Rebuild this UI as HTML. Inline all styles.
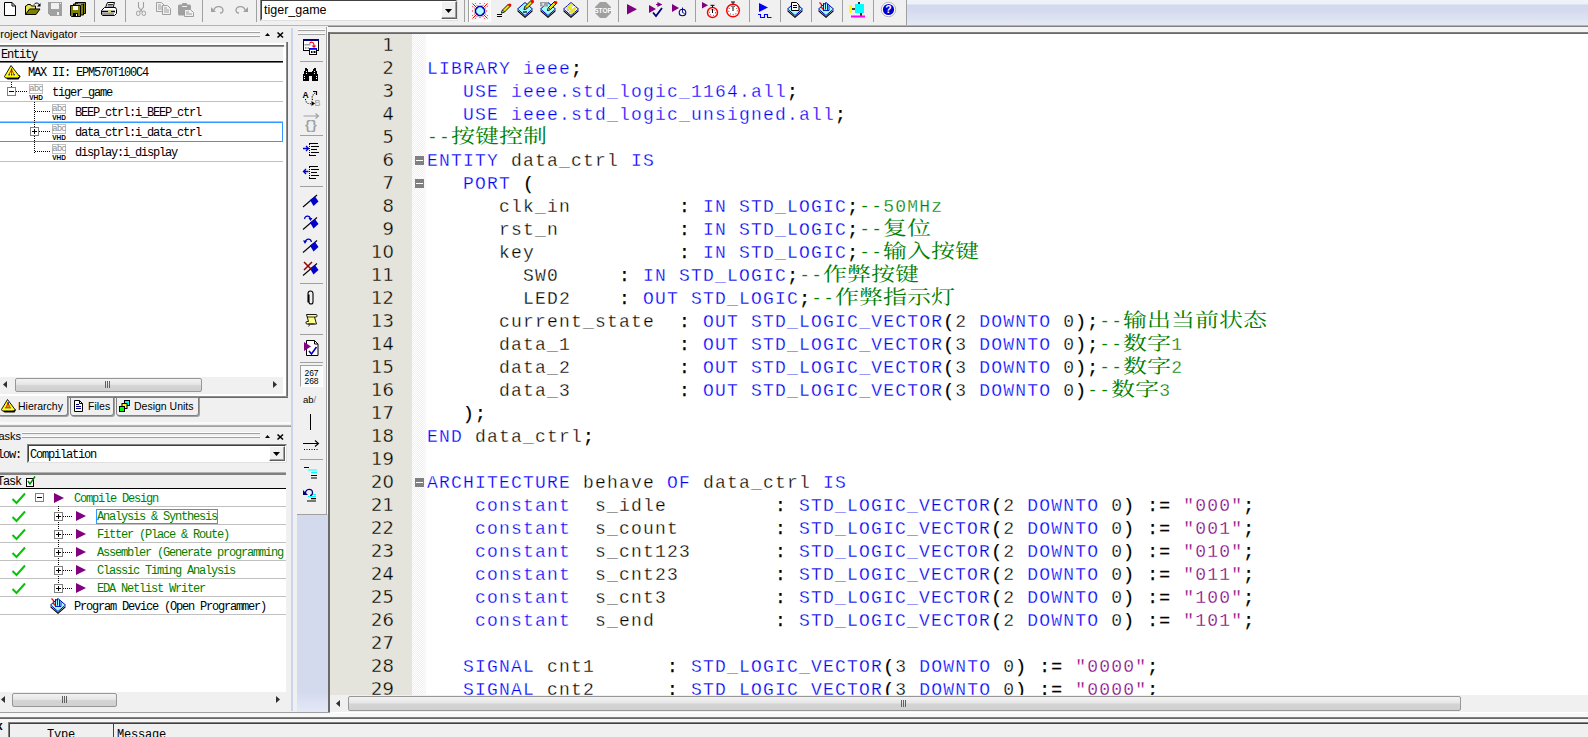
<!DOCTYPE html>
<html><head><meta charset="utf-8"><title>Quartus II</title>
<style>
html,body{margin:0;padding:0}
body{width:1588px;height:737px;overflow:hidden;background:#f0f0f0;position:relative;font-family:"Liberation Sans",sans-serif;font-size:11px;color:#000}
.a{position:absolute}
.hl{position:absolute;height:1px}
.vl{position:absolute;width:1px}
svg{position:absolute;overflow:visible}
.ui{position:absolute;font-family:"Liberation Sans",sans-serif;font-size:11px;white-space:pre;line-height:13px}
.sim{position:absolute;font-family:"Liberation Mono","Noto Sans CJK SC",monospace;font-size:12px;letter-spacing:-1.2px;white-space:pre;line-height:14px;color:#000;margin-top:1px}
.grn{color:#008000}
/* editor */
#ed{position:absolute;left:330px;top:34px;width:1258px;height:661px;background:#fff;overflow:hidden}
#lnm{position:absolute;left:0;top:0;width:82px;height:662px;background:#e4e4dc}
#fold{position:absolute;left:82px;top:0;width:14px;height:662px;background:repeating-conic-gradient(#f0f0f0 0% 25%,#fff 0% 50%) 0 0/2px 2px}
.ln{position:absolute;left:0;width:64px;text-align:right;font-family:"DejaVu Sans","Liberation Sans",sans-serif;font-size:18px;line-height:23px;height:23px;color:#000;margin-top:-1px;-webkit-text-stroke:.35px #e4e4dc}
.cl{position:absolute;left:97px;height:23px;line-height:23px;font-family:"Liberation Mono","Noto Serif CJK SC",monospace;font-size:18px;letter-spacing:1.2px;white-space:pre;color:#000;margin-top:1px;-webkit-text-stroke:.3px #fff}
.cl b{font-weight:normal;-webkit-text-stroke:.25px #000}
.k{color:#0000ff}.t{color:#0000f0}.s{color:#800080}.c{color:#008000}
.z{display:inline-block;letter-spacing:0;-webkit-text-stroke:0 transparent;font-family:"Noto Serif CJK SC","Noto Sans CJK SC",serif;font-size:20px;line-height:0;transform:translateY(.6px) scale(1.2,.94);transform-origin:0 0;vertical-align:baseline}
.fb{position:absolute;left:85px;width:9px;height:9px;background:#808080}
.fb:after{content:"";position:absolute;left:1px;top:4px;width:7px;height:1px;background:#fff}
</style></head>
<body>
<div class="a" style="left:907px;top:0;width:681px;height:25px;background:linear-gradient(#f1f3fa 0,#eef1f9 4px,#d3d9ed 5px,#d6dcef 12px,#e4e8f5 24px)"></div>
<div class="a" style="left:906px;top:0px;width:1px;height:25px;background:#a0a0a0;"></div>
<div class="a" style="left:0px;top:25px;width:1588px;height:1px;background:#b4b4b4;"></div>
<div class="a" style="left:328px;top:26px;width:1260px;height:1px;background:#808080;"></div>
<div class="a" style="left:94px;top:0px;width:1px;height:22px;background:#a0a0a0;"></div>
<div class="a" style="left:125px;top:0px;width:1px;height:22px;background:#a0a0a0;"></div>
<div class="a" style="left:202px;top:0px;width:1px;height:22px;background:#a0a0a0;"></div>
<div class="a" style="left:256px;top:0px;width:1px;height:22px;background:#a0a0a0;"></div>
<div class="a" style="left:464px;top:0px;width:1px;height:22px;background:#a0a0a0;"></div>
<div class="a" style="left:468px;top:0px;width:1px;height:22px;background:#a0a0a0;"></div>
<div class="a" style="left:587px;top:0px;width:1px;height:22px;background:#a0a0a0;"></div>
<div class="a" style="left:618px;top:0px;width:1px;height:22px;background:#a0a0a0;"></div>
<div class="a" style="left:695px;top:0px;width:1px;height:22px;background:#a0a0a0;"></div>
<div class="a" style="left:749px;top:0px;width:1px;height:22px;background:#a0a0a0;"></div>
<div class="a" style="left:780px;top:0px;width:1px;height:22px;background:#a0a0a0;"></div>
<div class="a" style="left:811px;top:0px;width:1px;height:22px;background:#a0a0a0;"></div>
<div class="a" style="left:842px;top:0px;width:1px;height:22px;background:#a0a0a0;"></div>
<div class="a" style="left:873px;top:0px;width:1px;height:22px;background:#a0a0a0;"></div>
<svg style="left:4px;top:2px" width="12" height="14" viewBox="0 0 12 14" ><path d="M0.5 0.5h7.5l3.5 3.5v9.5h-11z" fill="#fff" stroke="#000"/><path d="M8 0.5v3.5h3.5" fill="none" stroke="#000"/></svg>
<svg style="left:25px;top:2px" width="16" height="14" viewBox="0 0 16 14" ><path d="M0.5 12.5v-8.5h1l1-1.5h3l1 1.5h4v3" fill="#e6e64c" stroke="#000"/><path d="M0.5 12.5l4-5.5h10.5l-4 5.5z" fill="#808000" stroke="#000"/><path d="M9 2.5c1.5-2 4-2 5.5 0.5" fill="none" stroke="#000"/><path d="M15.5 1v3.5h-3.5z" fill="#000"/></svg>
<svg style="left:48px;top:2px" width="14" height="14" viewBox="0 0 14 14" shape-rendering="crispEdges"><path d="M0 0h14v14h-12l-2-2z" fill="#a0a0a0"/><rect x="3" y="1" width="8" height="6" fill="#f0f0f0"/><rect x="9" y="10" width="2" height="3" fill="#f0f0f0"/><rect x="12" y="1" width="1" height="1" fill="#f0f0f0"/></svg>
<svg style="left:70px;top:2px" width="16" height="15" viewBox="0 0 16 15" ><g transform="translate(5,0)"><path d="M0.5 0.5h10v11h-9l-1-1z" fill="#808000" stroke="#000"/><rect x="3" y="1" width="5" height="4" fill="#fff"/><rect x="3" y="8" width="5" height="3" fill="#000"/><rect x="6" y="9" width="1" height="2" fill="#fff"/></g><g transform="translate(3,1.5)"><path d="M0.5 0.5h10v11h-9l-1-1z" fill="#808000" stroke="#000"/><rect x="3" y="1" width="5" height="4" fill="#fff"/><rect x="3" y="8" width="5" height="3" fill="#000"/><rect x="6" y="9" width="1" height="2" fill="#fff"/></g><g transform="translate(0,3)"><path d="M0.5 0.5h10v11h-9l-1-1z" fill="#808000" stroke="#000"/><rect x="3" y="1" width="5" height="4" fill="#fff"/><rect x="3" y="8" width="5" height="3" fill="#000"/><rect x="6" y="9" width="1" height="2" fill="#fff"/></g></svg>
<svg style="left:101px;top:2px" width="16" height="14" viewBox="0 0 16 14" ><path d="M4.5 5.5l2-5h7l-1.5 5" fill="#fff" stroke="#000"/><path d="M7 2.5h5M6.5 4h5" stroke="#000" stroke-width=".8"/><path d="M0.5 8.5l3-3h11l1 2v4l-2 2h-12l-1-1z" fill="#fff" stroke="#000"/><path d="M1 9.5h13" stroke="#000" stroke-width="1.6"/><rect x="7" y="8.6" width="3" height="1.6" fill="#e6e600"/><path d="M1 12h12" stroke="#000" stroke-width=".8"/></svg>
<svg style="left:136px;top:2px" width="10" height="14" viewBox="0 0 10 14" ><path d="M2.5 0v5l4 5M7.5 0v5l-4 5" fill="none" stroke="#a0a0a0" stroke-width="1.1"/><ellipse cx="2.2" cy="11.3" rx="1.8" ry="2.3" fill="none" stroke="#a0a0a0"/><ellipse cx="7.8" cy="11.3" rx="1.8" ry="2.3" fill="none" stroke="#a0a0a0"/></svg>
<svg style="left:156px;top:2px" width="16" height="14" viewBox="0 0 16 14" ><g transform="translate(0,0)"><path d="M0.5 0.5h5l3 3v6h-8z" fill="#f0f0f0" stroke="#a0a0a0"/><path d="M2 3h3M2 5h5M2 7h5" stroke="#a0a0a0"/></g><g transform="translate(6,3)"><path d="M0.5 0.5h5l3 3v6h-8z" fill="#f0f0f0" stroke="#a0a0a0"/><path d="M2 3h3M2 5h5M2 7h5" stroke="#a0a0a0"/></g></svg>
<svg style="left:178px;top:3px" width="16" height="14" viewBox="0 0 16 14" ><rect x="0" y="1.5" width="13" height="11" rx="1.5" fill="#a0a0a0"/><rect x="4" y="0" width="5" height="2.5" rx="1" fill="#a0a0a0"/><rect x="4" y="3" width="5" height="1" fill="#f0f0f0"/><path d="M6.5 6.5h6l3 3v4h-9z" fill="#f0f0f0" stroke="#a0a0a0"/><path d="M8 9h3M8 11h6" stroke="#a0a0a0"/></svg>
<svg style="left:211px;top:5px" width="13" height="9" viewBox="0 0 13 9" ><path d="M0 2v5h5z" fill="#a0a0a0"/><path d="M3 5c1-4 8-5 9 0c0 2-1 3-3 3" fill="none" stroke="#a0a0a0" stroke-width="1.3"/></svg>
<svg style="left:235px;top:5px" width="13" height="9" viewBox="0 0 13 9" ><path d="M13 2v5h-5z" fill="#a0a0a0"/><path d="M10 5c-1-4-8-5-9 0c0 2 1 3 3 3" fill="none" stroke="#a0a0a0" stroke-width="1.3"/></svg>
<div class="a" style="left:469px;top:0;width:22px;height:22px;background:#f8f8f8;border:1px solid #fdfdfd;box-sizing:border-box"></div>
<svg style="left:472px;top:3px" width="16" height="16" viewBox="0 0 16 16" ><path d="M0.500 0.500l15 15M15.500 0.500l-15 15" stroke="#f00" stroke-width="1"/><path d="M3 0l4 5M0 3l5 4M13 0l-4 5M16 3l-5 4M3 16l4-5M0 13l5-4M13 16l-4-5M16 13l-5-4" stroke="#f00" stroke-width=".7" stroke-dasharray="1.500 1"/><path d="M8 0v2M8 14v2M0 8h2M14 8h2" stroke="#f00" stroke-dasharray="1 1"/><path d="M6.500 3.500h3l3 3v3l-3 3h-3l-3-3v-3z" fill="#b0ffff" stroke="#0000c0" stroke-width="1.500"/></svg>
<svg style="left:497px;top:3px" width="14" height="15" viewBox="0 0 14 15" ><g transform="translate(3.5,1)"><path d="M1 9l1-3 6-6 2 2-6 6z" fill="#e6e600" stroke="#000" stroke-width=".9"/><path d="M1 9l1-3 2 2z" fill="#fff" stroke="#000" stroke-width=".7"/><circle cx="9.3" cy="1" r="1.6" fill="#f00"/></g><path d="M0 11.5h5M0 13.5h5" stroke="#000" stroke-width="1.1"/></svg>
<svg style="left:517px;top:2px" width="16" height="16" viewBox="0 0 16 16" ><path d="M8 0.5l7.5 6.5-7.5 6.5-7.5-6.5z" fill="#9ff" stroke="#0000c0"/><path d="M0.5 8l7.5 6.5 7.5-6.5v1.5l-7.5 6.5-7.5-6.5z" fill="#000"/><g transform="translate(6,-1.5)"><path d="M1 9l1-3 6-6 2 2-6 6z" fill="#e6e600" stroke="#000" stroke-width=".9"/><path d="M1 9l1-3 2 2z" fill="#fff" stroke="#000" stroke-width=".7"/><circle cx="9.3" cy="1" r="1.6" fill="#f00"/></g><path d="M6 10h4" stroke="#000" stroke-width="1.2"/></svg>
<svg style="left:540px;top:2px" width="16" height="16" viewBox="0 0 16 16" ><path d="M8 0.5l7.5 6.5-7.5 6.5-7.5-6.5z" fill="#9ff" stroke="#0000c0"/><path d="M0.5 8l7.5 6.5 7.5-6.5v1.5l-7.5 6.5-7.5-6.5z" fill="#000"/><rect x="0" y="0" width="8" height="4.5" fill="#a0a0a0"/><rect x="2.5" y="1" width="1.2" height="2.5" fill="#fff"/><g transform="translate(6.5,-0.5)"><path d="M1 9l1-3 6-6 2 2-6 6z" fill="#e6e600" stroke="#000" stroke-width=".9"/><path d="M1 9l1-3 2 2z" fill="#fff" stroke="#000" stroke-width=".7"/><circle cx="9.3" cy="1" r="1.6" fill="#f00"/></g></svg>
<svg style="left:563px;top:2px" width="16" height="16" viewBox="0 0 16 16" ><path d="M8 0.5l7.5 6.5-7.5 6.5-7.5-6.5z" fill="#fff" stroke="#0000c0"/><path d="M0.5 8l7.5 6.5 7.5-6.5v1.5l-7.5 6.5-7.5-6.5z" fill="#000"/><path d="M4 3.500l7.500 6.500M2 5.500l7.500 6.500M6 10.500l7.500-6.500M4 9l7.500-6.500" stroke="#b0b0b0" stroke-width=".8"/><path d="M4.500 4l7 6.500" stroke="#e8e800" stroke-width="2.200"/><path d="M9 2l-5 4.500M13 6l-5.500 5" stroke="#e8e800" stroke-width="1.800"/></svg>
<svg style="left:595px;top:2px" width="16" height="16" viewBox="0 0 16 16" ><path d="M5 0h6l5 5v6l-5 5h-6l-5-5v-6z" fill="#a0a0a0"/><text x="8" y="10.5" font-family="Liberation Sans,sans-serif" font-weight="bold" font-size="6.5" fill="#fff" text-anchor="middle">STOP</text></svg>
<svg style="left:627px;top:4px" width="10" height="11" viewBox="0 0 10 11" ><path d="M0 0v10.5l10-5.25z" fill="#800080"/></svg>
<svg style="left:649px;top:2px" width="16" height="16" viewBox="0 0 16 16" ><path d="M0 3v8l7-4.0z" fill="#800080"/><path d="M7 2.5h5M9 1v3l3-1.5z" stroke="#800080" fill="#800080" stroke-width="1.2"/><path d="M4 10.5l3 3.5 6-8" fill="none" stroke="#000080" stroke-width="1.8"/></svg>
<svg style="left:672px;top:4px" width="15" height="13" viewBox="0 0 15 13" ><path d="M0 0v8l7-4.0z" fill="#800080"/><circle cx="10.5" cy="8.5" r="3.3" fill="#f0f0f0" stroke="#000080" stroke-width="1.1"/><path d="M10.5 3.5v5l2 1" fill="none" stroke="#000080" stroke-width=".9"/></svg>
<svg style="left:702px;top:2px" width="17" height="17" viewBox="0 0 17 17" ><path d="M0 0v6.5l6-3.25z" fill="#800080"/><circle cx="10.5" cy="10.5" r="5" fill="#fff" stroke="#f00" stroke-width="1.5"/><path d="M10.5 7.0v4M8.5 3.3h4M10.5 3.5v2" stroke="#000" stroke-width="1"/><circle cx="10.5" cy="10.5" r="3" fill="none" stroke="#000" stroke-width="1" stroke-dasharray="0.8 2.2"/></svg>
<svg style="left:725px;top:2px" width="16" height="16" viewBox="0 0 16 16" ><circle cx="8" cy="8.5" r="6.3" fill="#fff" stroke="#f00" stroke-width="1.5"/><path d="M8 3.7v5.3M6 0.0h4M8 0.20000000000000018v2" stroke="#000" stroke-width="1"/><circle cx="8" cy="8.5" r="4.3" fill="none" stroke="#000" stroke-width="1" stroke-dasharray="0.8 2.2"/></svg>
<svg style="left:758px;top:3px" width="14" height="15" viewBox="0 0 14 15" ><path d="M1 0v9l9-4.5z" fill="#0000ff"/><path d="M0 11.500h2.500v3h4v-3h3v3h4" fill="none" stroke="#0000ff" stroke-width="1.100"/></svg>
<svg style="left:787px;top:2px" width="16" height="16" viewBox="0 0 16 16" ><path d="M8 0.5l7.5 6.5-7.5 6.5-7.5-6.5z" fill="#9ff" stroke="#0000c0"/><path d="M0.5 8l7.5 6.5 7.5-6.5v1.5l-7.5 6.5-7.5-6.5z" fill="#000"/><path d="M4.500 0.500h5l2.500 2.500v5.500h-7.500z" fill="#fff" stroke="#000"/><path d="M6 3.500h4M6 5.500h4" stroke="#000" stroke-width="1"/></svg>
<svg style="left:818px;top:2px" width="16" height="16" viewBox="0 0 16 16" ><path d="M8 0.5l7.5 6.5-7.5 6.5-7.5-6.5z" fill="#9ff" stroke="#0000c0"/><path d="M0.5 8l7.5 6.5 7.5-6.5v1.5l-7.5 6.5-7.5-6.5z" fill="#000"/><path d="M1.500 0.500l2 2v3l2.500 2.500" fill="none" stroke="#f00" stroke-width="1.300"/><path d="M5.500 1v6.500M7.500 1v6.500M9.500 2v6.500" stroke="#0000c0" stroke-width=".9"/><path d="M5 8.500h6v-5" fill="none" stroke="#0000c0" stroke-width=".9"/></svg>
<svg style="left:849px;top:2px" width="16" height="16" viewBox="0 0 16 16" ><rect x="0" y="3" width="3" height="8" fill="#ff0"/><rect x="6" y="2" width="9" height="9" fill="#0ff"/><path d="M3 7h3M10 0v2M12 11v3" stroke="#000" stroke-width="1.6"/><rect x="2" y="13.5" width="14" height="2" fill="#f0f"/></svg>
<svg style="left:881px;top:2px" width="16" height="16" viewBox="0 0 16 16" ><circle cx="7.5" cy="7.5" r="7.2" fill="#fff" stroke="#a0a0a0" stroke-width=".8"/><circle cx="7.5" cy="7.5" r="5.6" fill="#0000d0"/><text x="7.5" y="11.3" font-family="Liberation Sans,sans-serif" font-weight="bold" font-size="10.5" fill="#fff" text-anchor="middle">?</text></svg>
<div class="a" style="left:260px;top:-1px;width:198px;height:22px;background:#fff;border:1px solid #808080;border-right-color:#e0e0e0;border-bottom-color:#e0e0e0;box-sizing:border-box"></div>
<div class="a" style="left:261px;top:0px;width:196px;height:20px;border:1px solid #404040;border-right-color:#fff;border-bottom-color:#fff;box-sizing:border-box"></div>
<div class="ui" style="left:264px;top:3px;font-size:12.5px;line-height:15px">tiger_game</div>
<div class="a" style="left:441px;top:1px;width:16px;height:18px;background:#f0f0f0;border:1px solid #fff;border-right:1px solid #606060;border-bottom:1px solid #606060;box-shadow:inset -1px -1px 0 #a0a0a0;box-sizing:border-box"></div>
<svg style="left:445px;top:9px" width="8" height="4"><path d="M0 0h7l-3.5 4z" fill="#000"/></svg>
<div class="ui" style="left:-7px;top:28px">Project Navigator</div>
<div class="a" style="left:80px;top:31px;width:180px;height:1px;background:#fff;"></div>
<div class="a" style="left:80px;top:32px;width:180px;height:1px;background:#a0a0a0;"></div>
<div class="a" style="left:80px;top:35px;width:180px;height:1px;background:#fff;"></div>
<div class="a" style="left:80px;top:36px;width:180px;height:1px;background:#a0a0a0;"></div>
<svg style="left:265px;top:33px" width="5" height="3"><path d="M0 3L2.5 0L5 3z" fill="#000"/></svg>
<svg style="left:277px;top:32px" width="7" height="6"><path d="M0.5 0.5L6 5.5M6 0.5L0.5 5.5" stroke="#000" stroke-width="1.6"/></svg>
<div class="a" style="left:0px;top:43px;width:286px;height:2px;background:#fff;"></div>
<div class="a" style="left:0px;top:45px;width:284px;height:1px;background:#696969;"></div>
<div class="a" style="left:0px;top:46px;width:284px;height:1px;background:#909090;"></div>
<div class="a" style="left:283px;top:47px;width:3px;height:349px;background:#fff;"></div>
<div class="a" style="left:286px;top:42px;width:1px;height:356px;background:#8c8c8c;"></div>
<div class="a" style="left:287px;top:42px;width:1px;height:356px;background:#696969;"></div>
<div class="a" style="left:0px;top:394px;width:286px;height:2px;background:#fff;"></div>
<div class="a" style="left:0px;top:396px;width:288px;height:1px;background:#8c8c8c;"></div>
<div class="a" style="left:0px;top:397px;width:288px;height:1px;background:#696969;"></div>
<div class="a" style="left:0px;top:47px;width:283px;height:330px;background:#fff;"></div>
<div class="a" style="left:0px;top:47px;width:283px;height:14px;background:#f0f0f0;"></div>
<div class="sim" style="left:1px;top:47px">Entity</div>
<div class="a" style="left:0px;top:61px;width:283px;height:1px;background:#000;"></div>
<div class="a" style="left:0px;top:62px;width:283px;height:1px;background:#707070;"></div>
<div class="a" style="left:0px;top:81px;width:283px;height:1px;background:#c0c0c0;"></div>
<div class="a" style="left:0px;top:101px;width:283px;height:1px;background:#c0c0c0;"></div>
<div class="a" style="left:0px;top:121px;width:283px;height:1px;background:#c0c0c0;"></div>
<div class="a" style="left:0px;top:141px;width:283px;height:1px;background:#c0c0c0;"></div>
<div class="a" style="left:0px;top:161px;width:283px;height:1px;background:#c0c0c0;"></div>
<div class="a" style="left:-1px;top:122px;width:284px;height:20px;border:1px solid #3399ff;box-sizing:border-box"></div>
<div class="sim" style="left:28px;top:65px">MAX II: EPM570T100C4</div>
<div class="sim" style="left:52px;top:85px">tiger_game</div>
<div class="sim" style="left:75px;top:105px">BEEP_ctrl:i_BEEP_ctrl</div>
<div class="sim" style="left:75px;top:125px">data_ctrl:i_data_ctrl</div>
<div class="sim" style="left:75px;top:145px">display:i_display</div>
<svg style="left:4px;top:65px" width="17" height="15" viewBox="0 0 17 15" ><path d="M2 12.500l1.500 2h11l2-3-1-1.500z" fill="#000"/><path d="M7 0.500l8.500 11-1.500 1.500h-12.500l-1-1.500z" fill="#ff0" stroke="#000" stroke-width=".9"/><path d="M7.500 4.500l-2.500 5M7.500 4.500l2.500 5M7.500 4.500v5" stroke="#c00000" stroke-width=".8"/><rect x="7" y="3.500" width="1.200" height="1.500" fill="#00f"/><rect x="4.500" y="9" width="1.200" height="1.500" fill="#00f"/><rect x="7" y="9" width="1.200" height="1.500" fill="#00f"/><rect x="9.500" y="9" width="1.200" height="1.500" fill="#00f"/></svg>
<div class="a" style="left:11px;top:82px;width:1px;height:5px;background:repeating-linear-gradient(180deg,#000 0 1px,transparent 1px 2px)"></div>
<div class="a" style="left:7px;top:87px;width:9px;height:9px;box-sizing:border-box;border:1px solid #808080;background:#fff"></div><div class="a" style="left:9px;top:91px;width:5px;height:1px;background:#000"></div>
<div class="a" style="left:16px;top:91px;width:11px;height:1px;background:repeating-linear-gradient(90deg,#000 0 1px,transparent 1px 2px)"></div>
<div class="a" style="left:29px;top:84px;width:14px;height:10px;box-sizing:border-box;border:1px solid #c0c0c0;background:#fff"></div><div class="a" style="left:29px;top:83px;width:14px;text-align:center;font-family:Liberation Sans,Arial,sans-serif;font-size:9px;line-height:10px;color:#8c8c8c;letter-spacing:-.4px">abc</div><div class="a" style="left:28px;top:94px;width:16px;text-align:center;font-family:Liberation Sans,Arial,sans-serif;font-size:6.5px;font-weight:bold;line-height:7px;color:#000">VHD</div>
<div class="a" style="left:34px;top:102px;width:1px;height:51px;background:repeating-linear-gradient(180deg,#000 0 1px,transparent 1px 2px)"></div>
<div class="a" style="left:35px;top:111px;width:16px;height:1px;background:repeating-linear-gradient(90deg,#000 0 1px,transparent 1px 2px)"></div>
<div class="a" style="left:35px;top:131px;width:16px;height:1px;background:repeating-linear-gradient(90deg,#000 0 1px,transparent 1px 2px)"></div>
<div class="a" style="left:35px;top:151px;width:16px;height:1px;background:repeating-linear-gradient(90deg,#000 0 1px,transparent 1px 2px)"></div>
<div class="a" style="left:30px;top:127px;width:9px;height:9px;box-sizing:border-box;border:1px solid #808080;background:#fff"></div><div class="a" style="left:32px;top:131px;width:5px;height:1px;background:#000"></div><div class="a" style="left:34px;top:129px;width:1px;height:5px;background:#000"></div>
<div class="a" style="left:52px;top:104px;width:14px;height:10px;box-sizing:border-box;border:1px solid #c0c0c0;background:#fff"></div><div class="a" style="left:52px;top:103px;width:14px;text-align:center;font-family:Liberation Sans,Arial,sans-serif;font-size:9px;line-height:10px;color:#8c8c8c;letter-spacing:-.4px">abc</div><div class="a" style="left:51px;top:114px;width:16px;text-align:center;font-family:Liberation Sans,Arial,sans-serif;font-size:6.5px;font-weight:bold;line-height:7px;color:#000">VHD</div>
<div class="a" style="left:52px;top:124px;width:14px;height:10px;box-sizing:border-box;border:1px solid #c0c0c0;background:#fff"></div><div class="a" style="left:52px;top:123px;width:14px;text-align:center;font-family:Liberation Sans,Arial,sans-serif;font-size:9px;line-height:10px;color:#8c8c8c;letter-spacing:-.4px">abc</div><div class="a" style="left:51px;top:134px;width:16px;text-align:center;font-family:Liberation Sans,Arial,sans-serif;font-size:6.5px;font-weight:bold;line-height:7px;color:#000">VHD</div>
<div class="a" style="left:52px;top:144px;width:14px;height:10px;box-sizing:border-box;border:1px solid #c0c0c0;background:#fff"></div><div class="a" style="left:52px;top:143px;width:14px;text-align:center;font-family:Liberation Sans,Arial,sans-serif;font-size:9px;line-height:10px;color:#8c8c8c;letter-spacing:-.4px">abc</div><div class="a" style="left:51px;top:154px;width:16px;text-align:center;font-family:Liberation Sans,Arial,sans-serif;font-size:6.5px;font-weight:bold;line-height:7px;color:#000">VHD</div>
<div class="a" style="left:0px;top:377px;width:283px;height:17px;background:#f0f0f0;"></div>
<div class="a" style="left:15px;top:378px;width:187px;height:14px;box-sizing:border-box;border:1px solid #979797;border-radius:2px;background:linear-gradient(#f2f2f2,#e6e6e6 45%,#d4d4d4 55%,#d0d0d0)"></div>
<div class="a" style="left:105px;top:381px;width:1px;height:7px;background:#606060;"></div>
<div class="a" style="left:107px;top:381px;width:1px;height:7px;background:#606060;"></div>
<div class="a" style="left:109px;top:381px;width:1px;height:7px;background:#606060;"></div>
<svg style="left:3px;top:381px" width="4" height="7"><path d="M4 0v7L0 3.5z" fill="#303030"/></svg>
<svg style="left:273px;top:381px" width="4" height="7"><path d="M0 0v7L4 3.5z" fill="#303030"/></svg>
<div class="a" style="left:-2px;top:396px;width:70px;height:20px;box-sizing:border-box;border:1px solid #808080;border-top:none;border-radius:0 0 3px 3px;background:#f0f0f0;box-shadow:1px 1px 0 #a0a0a0"></div>
<div class="ui" style="left:18px;top:400px;font-size:10.5px">Hierarchy</div>
<div class="a" style="left:70px;top:397px;width:44px;height:19px;box-sizing:border-box;border:1px solid #808080;border-top:1px solid #808080;border-radius:0 0 3px 3px;background:#f0f0f0;box-shadow:1px 1px 0 #a0a0a0"></div>
<div class="ui" style="left:88px;top:400px;font-size:10.5px">Files</div>
<div class="a" style="left:116px;top:397px;width:83px;height:19px;box-sizing:border-box;border:1px solid #808080;border-top:1px solid #808080;border-radius:0 0 3px 3px;background:#f0f0f0;box-shadow:1px 1px 0 #a0a0a0"></div>
<div class="ui" style="left:134px;top:400px;font-size:10.5px">Design Units</div>
<svg style="left:1px;top:399px" width="15" height="14" viewBox="0 0 15 14" ><path d="M2 12l1.500 1.500h10l1.500-2.500-1-1z" fill="#000"/><path d="M6.500 0.500l7.500 10-1.500 1.500h-11l-1-1.500z" fill="#ff0" stroke="#000" stroke-width=".9"/><path d="M7 4l-2 4.500M7 4l2 4.500M7 4v4.500" stroke="#c00000" stroke-width=".8"/><rect x="6.500" y="3" width="1.200" height="1.500" fill="#00f"/><rect x="4.500" y="8" width="1" height="1.500" fill="#00f"/><rect x="6.500" y="8" width="1" height="1.500" fill="#00f"/><rect x="8.500" y="8" width="1" height="1.500" fill="#00f"/></svg>
<svg style="left:74px;top:400px" width="9" height="12" viewBox="0 0 9 12" ><path d="M0.500 0.500h5l3 3v8h-8z" fill="#fff" stroke="#000"/><path d="M5.500 0.500v3h3" fill="none" stroke="#000"/><path d="M2 4.500h3M2 6.500h5M2 8.500h5" stroke="#000080"/></svg>
<svg style="left:119px;top:400px" width="12" height="12" viewBox="0 0 12 12" ><rect x="5.500" y="0.500" width="5" height="5" fill="#0ff" stroke="#000"/><rect x="3" y="3.500" width="5" height="5" fill="#ff0" stroke="#000"/><rect x="0.500" y="6.500" width="5" height="5" fill="#0f0" stroke="#000"/></svg>
<div class="a" style="left:0px;top:422px;width:291px;height:2px;background:#fafafa;"></div>
<div class="a" style="left:0px;top:425px;width:291px;height:1px;background:#b4b4b4;"></div>
<div class="a" style="left:0px;top:426px;width:291px;height:1px;background:#a0a0a0;"></div>
<div class="ui" style="left:-7px;top:430px">Tasks</div>
<div class="a" style="left:22px;top:432px;width:238px;height:1px;background:#fff;"></div>
<div class="a" style="left:22px;top:433px;width:238px;height:1px;background:#a0a0a0;"></div>
<div class="a" style="left:22px;top:436px;width:238px;height:1px;background:#fff;"></div>
<div class="a" style="left:22px;top:437px;width:238px;height:1px;background:#a0a0a0;"></div>
<svg style="left:265px;top:435px" width="5" height="3"><path d="M0 3L2.5 0L5 3z" fill="#000"/></svg>
<svg style="left:277px;top:434px" width="7" height="6"><path d="M0.5 0.5L6 5.5M6 0.5L0.5 5.5" stroke="#000" stroke-width="1.6"/></svg>
<div class="sim" style="left:-9px;top:447px">Flow:</div>
<div class="a" style="left:27px;top:444px;width:260px;height:19px;background:#fff;border:1px solid #808080;border-right-color:#e0e0e0;border-bottom-color:#e0e0e0;box-sizing:border-box"></div>
<div class="a" style="left:28px;top:445px;width:258px;height:17px;border:1px solid #404040;border-right-color:#fff;border-bottom-color:#fff;box-sizing:border-box"></div>
<div class="sim" style="left:30px;top:447px">Compilation</div>
<div class="a" style="left:269px;top:446px;width:16px;height:15px;background:#f0f0f0;border:1px solid #fff;border-right:1px solid #606060;border-bottom:1px solid #606060;box-shadow:inset -1px -1px 0 #a0a0a0;box-sizing:border-box"></div>
<svg style="left:273px;top:452px" width="8" height="4"><path d="M0 0h7l-3.5 4z" fill="#000"/></svg>
<div class="a" style="left:0px;top:472px;width:286px;height:1px;background:#b0b0b0;"></div>
<div class="a" style="left:0px;top:473px;width:286px;height:2px;background:#808080;"></div>
<div class="a" style="left:0px;top:475px;width:286px;height:217px;background:#fff;"></div>
<div class="a" style="left:0px;top:475px;width:286px;height:13px;background:#f0f0f0;"></div>
<div class="sim" style="left:-3px;top:474px">Task</div>
<div class="a" style="left:0px;top:488px;width:286px;height:1px;background:#000;"></div>
<div class="a" style="left:0px;top:506px;width:286px;height:1px;background:#c0c0c0;"></div>
<div class="a" style="left:0px;top:524px;width:286px;height:1px;background:#c0c0c0;"></div>
<div class="a" style="left:0px;top:542px;width:286px;height:1px;background:#c0c0c0;"></div>
<div class="a" style="left:0px;top:560px;width:286px;height:1px;background:#c0c0c0;"></div>
<div class="a" style="left:0px;top:578px;width:286px;height:1px;background:#c0c0c0;"></div>
<div class="a" style="left:0px;top:596px;width:286px;height:1px;background:#c0c0c0;"></div>
<div class="a" style="left:0px;top:614px;width:286px;height:1px;background:#c0c0c0;"></div>
<div class="sim grn" style="left:74px;top:491px">Compile Design</div>
<div class="sim grn" style="left:97px;top:509px">Analysis &amp; Synthesis</div>
<div class="sim grn" style="left:97px;top:527px">Fitter (Place &amp; Route)</div>
<div class="sim grn" style="left:97px;top:545px">Assembler (Generate programming</div>
<div class="sim grn" style="left:97px;top:563px">Classic Timing Analysis</div>
<div class="sim grn" style="left:97px;top:581px">EDA Netlist Writer</div>
<div class="sim" style="left:74px;top:599px">Program Device (Open Programmer)</div>
<svg style="left:12px;top:493px" width="14" height="11" viewBox="0 0 14 11" ><path d="M0.500 6l4 4l8.500-9.500" fill="none" stroke="#00c800" stroke-width="2"/></svg>
<svg style="left:12px;top:511px" width="14" height="11" viewBox="0 0 14 11" ><path d="M0.500 6l4 4l8.500-9.500" fill="none" stroke="#00c800" stroke-width="2"/></svg>
<svg style="left:12px;top:529px" width="14" height="11" viewBox="0 0 14 11" ><path d="M0.500 6l4 4l8.500-9.500" fill="none" stroke="#00c800" stroke-width="2"/></svg>
<svg style="left:12px;top:547px" width="14" height="11" viewBox="0 0 14 11" ><path d="M0.500 6l4 4l8.500-9.500" fill="none" stroke="#00c800" stroke-width="2"/></svg>
<svg style="left:12px;top:565px" width="14" height="11" viewBox="0 0 14 11" ><path d="M0.500 6l4 4l8.500-9.500" fill="none" stroke="#00c800" stroke-width="2"/></svg>
<svg style="left:12px;top:583px" width="14" height="11" viewBox="0 0 14 11" ><path d="M0.500 6l4 4l8.500-9.500" fill="none" stroke="#00c800" stroke-width="2"/></svg>
<div class="a" style="left:35px;top:493px;width:9px;height:9px;box-sizing:border-box;border:1px solid #808080;background:#fff"></div><div class="a" style="left:37px;top:497px;width:5px;height:1px;background:#000"></div>
<svg style="left:54px;top:493px" width="10" height="10" viewBox="0 0 10 10" ><path d="M0 0v10l10-5z" fill="#800080"/></svg>
<div class="a" style="left:58px;top:506px;width:1px;height:82px;background:repeating-linear-gradient(180deg,#000 0 1px,transparent 1px 2px)"></div>
<div class="a" style="left:54px;top:512px;width:9px;height:9px;box-sizing:border-box;border:1px solid #808080;background:#fff"></div><div class="a" style="left:56px;top:516px;width:5px;height:1px;background:#000"></div><div class="a" style="left:58px;top:514px;width:1px;height:5px;background:#000"></div>
<div class="a" style="left:63px;top:516px;width:9px;height:1px;background:repeating-linear-gradient(90deg,#000 0 1px,transparent 1px 2px)"></div>
<svg style="left:76px;top:511px" width="10" height="10" viewBox="0 0 10 10" ><path d="M0 0v10l10-5z" fill="#800080"/></svg>
<div class="a" style="left:54px;top:530px;width:9px;height:9px;box-sizing:border-box;border:1px solid #808080;background:#fff"></div><div class="a" style="left:56px;top:534px;width:5px;height:1px;background:#000"></div><div class="a" style="left:58px;top:532px;width:1px;height:5px;background:#000"></div>
<div class="a" style="left:63px;top:534px;width:9px;height:1px;background:repeating-linear-gradient(90deg,#000 0 1px,transparent 1px 2px)"></div>
<svg style="left:76px;top:529px" width="10" height="10" viewBox="0 0 10 10" ><path d="M0 0v10l10-5z" fill="#800080"/></svg>
<div class="a" style="left:54px;top:548px;width:9px;height:9px;box-sizing:border-box;border:1px solid #808080;background:#fff"></div><div class="a" style="left:56px;top:552px;width:5px;height:1px;background:#000"></div><div class="a" style="left:58px;top:550px;width:1px;height:5px;background:#000"></div>
<div class="a" style="left:63px;top:552px;width:9px;height:1px;background:repeating-linear-gradient(90deg,#000 0 1px,transparent 1px 2px)"></div>
<svg style="left:76px;top:547px" width="10" height="10" viewBox="0 0 10 10" ><path d="M0 0v10l10-5z" fill="#800080"/></svg>
<div class="a" style="left:54px;top:566px;width:9px;height:9px;box-sizing:border-box;border:1px solid #808080;background:#fff"></div><div class="a" style="left:56px;top:570px;width:5px;height:1px;background:#000"></div><div class="a" style="left:58px;top:568px;width:1px;height:5px;background:#000"></div>
<div class="a" style="left:63px;top:570px;width:9px;height:1px;background:repeating-linear-gradient(90deg,#000 0 1px,transparent 1px 2px)"></div>
<svg style="left:76px;top:565px" width="10" height="10" viewBox="0 0 10 10" ><path d="M0 0v10l10-5z" fill="#800080"/></svg>
<div class="a" style="left:54px;top:584px;width:9px;height:9px;box-sizing:border-box;border:1px solid #808080;background:#fff"></div><div class="a" style="left:56px;top:588px;width:5px;height:1px;background:#000"></div><div class="a" style="left:58px;top:586px;width:1px;height:5px;background:#000"></div>
<div class="a" style="left:63px;top:588px;width:9px;height:1px;background:repeating-linear-gradient(90deg,#000 0 1px,transparent 1px 2px)"></div>
<svg style="left:76px;top:583px" width="10" height="10" viewBox="0 0 10 10" ><path d="M0 0v10l10-5z" fill="#800080"/></svg>
<div class="a" style="left:26px;top:478px;width:8px;height:9px;box-sizing:border-box;border:1px solid #000;background:#fff"></div>
<svg style="left:27px;top:476px" width="9" height="9" viewBox="0 0 9 9" ><path d="M1 5l2 3l5-7.500" fill="none" stroke="#008000" stroke-width="1.400"/></svg>
<svg style="left:50px;top:598px" width="16" height="16" viewBox="0 0 16 16" ><path d="M8 0.5l7.5 6.5-7.5 6.5-7.5-6.5z" fill="#9ff" stroke="#0000c0"/><path d="M0.5 8l7.5 6.5 7.5-6.5v1.5l-7.5 6.5-7.5-6.5z" fill="#000"/><path d="M1.500 0.500l2 2v3l2.500 2.500" fill="none" stroke="#f00" stroke-width="1.300"/><path d="M5.500 1v6.500M7.500 1v6.500M9.500 2v6.500" stroke="#0000c0" stroke-width=".9"/><path d="M5 8.500h6v-5" fill="none" stroke="#0000c0" stroke-width=".9"/></svg>
<div class="a" style="left:96px;top:509px;width:122px;height:15px;border:1px solid #3399ff;box-sizing:border-box"></div>
<div class="a" style="left:0px;top:692px;width:286px;height:17px;background:#f0f0f0;"></div>
<div class="a" style="left:12px;top:693px;width:105px;height:14px;box-sizing:border-box;border:1px solid #979797;border-radius:2px;background:linear-gradient(#f2f2f2,#e6e6e6 45%,#d4d4d4 55%,#d0d0d0)"></div>
<div class="a" style="left:62px;top:696px;width:1px;height:7px;background:#606060;"></div>
<div class="a" style="left:64px;top:696px;width:1px;height:7px;background:#606060;"></div>
<div class="a" style="left:66px;top:696px;width:1px;height:7px;background:#606060;"></div>
<svg style="left:1px;top:696px" width="4" height="7"><path d="M4 0v7L0 3.5z" fill="#303030"/></svg>
<svg style="left:276px;top:696px" width="4" height="7"><path d="M0 0v7L4 3.5z" fill="#303030"/></svg>
<div class="a" style="left:291px;top:28px;width:2px;height:683px;background:#ccd3ec;"></div>
<div class="a" style="left:294px;top:27px;width:33px;height:487px;background:#f0f0f0;"></div>
<div class="a" style="left:297px;top:514px;width:31px;height:198px;background:linear-gradient(#d4daee 0,#d4daee 178px,#e4e9f8 198px)"></div>
<div class="a" style="left:297px;top:514px;width:30px;height:1px;background:#a0a0a0;"></div>
<div class="a" style="left:326px;top:27px;width:1px;height:487px;background:#a0a0a0;"></div>
<div class="a" style="left:327px;top:27px;width:1px;height:487px;background:#fff;"></div>
<div class="a" style="left:298px;top:29px;width:27px;height:1px;background:#fff;"></div>
<div class="a" style="left:298px;top:30px;width:27px;height:1px;background:#a0a0a0;"></div>
<div class="a" style="left:298px;top:33px;width:27px;height:1px;background:#fff;"></div>
<div class="a" style="left:298px;top:34px;width:27px;height:1px;background:#a0a0a0;"></div>
<div class="a" style="left:300px;top:61px;width:23px;height:1px;background:#a0a0a0;"></div>
<div class="a" style="left:300px;top:135px;width:23px;height:1px;background:#a0a0a0;"></div>
<div class="a" style="left:300px;top:186px;width:23px;height:1px;background:#a0a0a0;"></div>
<div class="a" style="left:300px;top:283px;width:23px;height:1px;background:#a0a0a0;"></div>
<div class="a" style="left:300px;top:334px;width:23px;height:1px;background:#a0a0a0;"></div>
<div class="a" style="left:300px;top:362px;width:23px;height:1px;background:#a0a0a0;"></div>
<div class="a" style="left:300px;top:459px;width:23px;height:1px;background:#a0a0a0;"></div>
<svg style="left:303px;top:39px" width="16" height="16" viewBox="0 0 16 16" ><rect x="0.5" y="0.5" width="15" height="11" fill="#fff" stroke="#000"/><rect x="0" y="0" width="16" height="2" fill="#000080"/><rect x="1.5" y="5" width="6" height="1.5" fill="#a0a0a0"/><rect x="2" y="8" width="1.5" height="2" fill="#a0a0a0"/><rect x="4.5" y="8" width="1.5" height="2" fill="#a0a0a0"/><path d="M6.5 4.5c1-2 4.5-2 4.500 1.500v1" fill="none" stroke="#f00" stroke-width="1.1"/><path d="M8.500 6.500h5l-2.500 2.500z" fill="#f00"/><rect x="6.500" y="9.500" width="7" height="6" fill="#fff" stroke="#000"/><rect x="6" y="9" width="8" height="1.800" fill="#00f"/><rect x="8" y="12" width="1.500" height="2" fill="#000"/><rect x="10.500" y="12" width="2" height="2" fill="#000"/></svg>
<svg style="left:303px;top:68px" width="15" height="13" viewBox="0 0 15 13" shape-rendering="crispEdges"><path d="M2 0h2l1 2 1 3v8h-6v-5l1-4 1-2z" fill="#000"/><path d="M13 0h-2l-1 2-1 3v8h6v-5l-1-4-1-2z" fill="#000"/><rect x="6" y="4" width="3" height="4" fill="#000"/><path d="M1.500 8v4M3.500 3v3M11.500 3v3M13.500 8v4" stroke="#fff" stroke-width="1" stroke-dasharray="1 1"/></svg>
<svg style="left:303px;top:91px" width="17" height="16" viewBox="0 0 17 16" ><text x="-0.500" y="7" font-family="Liberation Sans,Arial,sans-serif" font-weight="bold" font-size="8.500" fill="#000">A</text><text x="11.500" y="15" font-family="Liberation Sans,Arial,sans-serif" font-size="9" fill="#a0a0a0">B</text><path d="M2.500 8c0 4 3 5.500 7 4.500" fill="none" stroke="#000" stroke-width="1.100" stroke-dasharray="1.100 1.300"/><path d="M8.500 10l3.500 2.500-3.500 2.500z" fill="#000"/><path d="M9.500 9c-1-3 0-5 2.500-7" fill="none" stroke="#000" stroke-width="1.100" stroke-dasharray="1.100 1.300"/><path d="M10 0.500h3.500v3.500" fill="none" stroke="#000" stroke-width="1.200"/></svg>
<svg style="left:303px;top:113px" width="17" height="17" viewBox="0 0 17 17" ><path d="M0.500 3h14.500M12.500 0.500l3 2.500-3 2.500" fill="none" stroke="#a0a0a0" stroke-width="1.100"/><text x="1" y="15.500" font-family="Liberation Mono,monospace" font-weight="bold" font-size="13" letter-spacing="-1.800" fill="#a0a0a0">{}</text></svg>
<svg style="left:303px;top:143px" width="16" height="14" viewBox="0 0 16 14" ><path d="M0 5.500h5M3 3l2.500 2.500-2.500 2.500" fill="none" stroke="#0000c0" stroke-width="1.300"/><path d="M6 0.500h9M8 3.500h8M8 6.500h6M8 9.500h8M6 12.500h7" stroke="#000" stroke-width="1"/><path d="M6.500 1v12" stroke="#000" stroke-dasharray="1 1" stroke-width="1"/></svg>
<svg style="left:303px;top:166px" width="16" height="14" viewBox="0 0 16 14" ><path d="M0.500 5.500h5M3 3l-2.500 2.500 2.500 2.500" fill="none" stroke="#0000c0" stroke-width="1.300"/><path d="M6 0.500h9M8 3.500h8M8 6.500h6M8 9.500h8M6 12.500h7" stroke="#000" stroke-width="1"/><path d="M6.500 1v12" stroke="#000" stroke-dasharray="1 1" stroke-width="1"/></svg>
<svg style="left:303px;top:194px" width="16" height="14" viewBox="0 0 16 14" ><path d="M0 13l14-12" stroke="#000" stroke-width="1.100"/><path d="M7 6l5-3.500 3.500 5-5 4.500z" fill="#0000d0"/></svg>
<svg style="left:303px;top:215px" width="16" height="15" viewBox="0 0 16 15" ><g transform="translate(0,1.500)"><path d="M0 13l14-12" stroke="#000" stroke-width="1.100"/><path d="M7 6l5-3.500 3.500 5-5 4.500z" fill="#0000d0"/></g><path d="M1.500 4c.500-3.500 5-4 6 0" fill="none" stroke="#0000c0" stroke-width="1.200"/><path d="M5.500 3h4l-2 3z" fill="#0000c0"/></svg>
<svg style="left:303px;top:238px" width="16" height="15" viewBox="0 0 16 15" ><g transform="translate(0,1.500)"><path d="M0 13l14-12" stroke="#000" stroke-width="1.100"/><path d="M7 6l5-3.500 3.500 5-5 4.500z" fill="#0000d0"/></g><path d="M2.500 4c.500-3.500 5-4 6 0" fill="none" stroke="#0000c0" stroke-width="1.200"/><path d="M0 2.500h4l-2 3.500z" fill="#0000c0"/></svg>
<svg style="left:303px;top:261px" width="16" height="15" viewBox="0 0 16 15" ><g transform="translate(0,1.500)"><path d="M0 13l14-12" stroke="#000" stroke-width="1.100"/><path d="M7 6l5-3.500 3.500 5-5 4.500z" fill="#0000d0"/></g><path d="M1 1l8 8M9 1l-8 8" stroke="#900000" stroke-width="1.500"/></svg>
<svg style="left:306px;top:290px" width="9" height="15" viewBox="0 0 9 15" ><path d="M2.500 4v7.500a2 2 0 0 0 4 0v-8.500a2.500 2.500 0 0 0-5 0v9" fill="none" stroke="#000" stroke-width="1.100" transform="translate(0.500,0.500)"/></svg>
<svg style="left:304px;top:314px" width="14" height="13" viewBox="0 0 14 13" ><path d="M2.500 0.500h9.500c1.500 0 1.500 2.500 0 2.500h-1.500l2 7h-9.500c-1.500 0-1.500-2.500 0-2.500h1.500z" fill="#ffff90" stroke="#000" stroke-width=".9"/><path d="M3 3h7.500M4.500 12.500c1-.5 1-2 0-2.500h6" fill="none" stroke="#000" stroke-width=".8"/></svg>
<svg style="left:304px;top:340px" width="15" height="16" viewBox="0 0 15 16" ><path d="M2.500 0.500h8l3.500 3.500v11.500h-11.500z" fill="#fff" stroke="#000"/><path d="M10.500 0.500v3.500h3.500" fill="none" stroke="#000"/><path d="M0 2v9l7-4.500z" fill="#800080"/><path d="M5 11l2.500 3 5-7" fill="none" stroke="#0000c0" stroke-width="1.600"/></svg>
<div class="a" style="left:300px;top:365px;width:23px;height:22px;background:#fafafa;border:1px solid #a0a0a0;border-right-color:#fff;border-bottom-color:#fff;box-sizing:border-box"></div>
<div class="a" style="left:300px;top:369px;width:23px;text-align:center;font-family:Liberation Sans,Arial,sans-serif;font-size:8.5px;line-height:8px;color:#000">267<br>268</div>
<div class="a" style="left:303px;top:394px;font-family:Liberation Sans,Arial,sans-serif;font-size:9.5px;line-height:12px;color:#000">ab<span style="color:#808080">/</span></div>
<div class="a" style="left:310px;top:414px;width:1px;height:16px;background:#000"></div>
<svg style="left:303px;top:439px" width="17" height="12" viewBox="0 0 17 12" ><path d="M0 4.500h15M12 1.500l3.500 3-3.500 3" fill="none" stroke="#000" stroke-width="1.100"/><path d="M1 10.500h14" stroke="#000" stroke-dasharray="1 1.500"/></svg>
<svg style="left:304px;top:467px" width="13" height="12" viewBox="0 0 13 12" ><path d="M0 0.500h5M7 8.500h6M7 11h6" stroke="#000" stroke-width="1.200"/><path d="M4 3h9M7 5.700h6" stroke="#0ff" stroke-width="1.200"/></svg>
<svg style="left:303px;top:488px" width="14" height="14" viewBox="0 0 14 14" ><path d="M0 2v5h5z" fill="#000080"/><path d="M2.500 5.500c0-5 7-5.500 7-1 0 2-1 3-2.500 3" fill="none" stroke="#000080" stroke-width="1.300"/><path d="M5 8.500h8M10 6.500h3" stroke="#0ff" stroke-width="1.200"/><path d="M8 10.700h5M4 13h9" stroke="#000" stroke-width="1.200"/></svg>
<div class="a" style="left:328px;top:27px;width:1260px;height:5px;background:#f4f4f4;"></div>
<div class="a" style="left:328px;top:32px;width:1260px;height:1px;background:#808080;"></div>
<div class="a" style="left:328px;top:33px;width:1260px;height:1px;background:#696969;"></div>
<div class="a" style="left:328px;top:32px;width:2px;height:680px;background:#696969;"></div>
<div id="ed"><div id="lnm"></div><div id="fold"></div>
<div class="ln" style="top:0px">1</div>
<div class="ln" style="top:23px">2</div>
<div class="cl" style="top:23px"><span class="k">LIBRARY ieee</span><b>;</b></div>
<div class="ln" style="top:46px">3</div>
<div class="cl" style="top:46px">   <span class="k">USE ieee.std_logic_1164.all</span><b>;</b></div>
<div class="ln" style="top:69px">4</div>
<div class="cl" style="top:69px">   <span class="k">USE ieee.std_logic_unsigned.all</span><b>;</b></div>
<div class="ln" style="top:92px">5</div>
<div class="cl" style="top:92px"><span class="c">--<span class="z" style="width:80px;margin-right:16px">按键控制</span></span></div>
<div class="ln" style="top:115px">6</div>
<div class="cl" style="top:115px"><span class="k">ENTITY</span> data_ctrl <span class="k">IS</span></div>
<div class="ln" style="top:138px">7</div>
<div class="cl" style="top:138px">   <span class="k">PORT</span> <b>(</b></div>
<div class="ln" style="top:161px">8</div>
<div class="cl" style="top:161px">      clk_in         <b>:</b> <span class="k">IN</span> <span class="t">STD_LOGIC</span><b>;</b><span class="c">--50MHz</span></div>
<div class="ln" style="top:184px">9</div>
<div class="cl" style="top:184px">      rst_n          <b>:</b> <span class="k">IN</span> <span class="t">STD_LOGIC</span><b>;</b><span class="c">--<span class="z" style="width:40px;margin-right:8px">复位</span></span></div>
<div class="ln" style="top:207px">10</div>
<div class="cl" style="top:207px">      key            <b>:</b> <span class="k">IN</span> <span class="t">STD_LOGIC</span><b>;</b><span class="c">--<span class="z" style="width:80px;margin-right:16px">输入按键</span></span></div>
<div class="ln" style="top:230px">11</div>
<div class="cl" style="top:230px">        SW0     <b>:</b> <span class="k">IN</span> <span class="t">STD_LOGIC</span><b>;</b><span class="c">--<span class="z" style="width:80px;margin-right:16px">作弊按键</span></span></div>
<div class="ln" style="top:253px">12</div>
<div class="cl" style="top:253px">        LED2    <b>:</b> <span class="k">OUT</span> <span class="t">STD_LOGIC</span><b>;</b><span class="c">--<span class="z" style="width:100px;margin-right:20px">作弊指示灯</span></span></div>
<div class="ln" style="top:276px">13</div>
<div class="cl" style="top:276px">      current_state  <b>:</b> <span class="k">OUT</span> <span class="t">STD_LOGIC_VECTOR</span><b>(</b>2 <span class="k">DOWNTO</span> 0<b>);</b><span class="c">--<span class="z" style="width:120px;margin-right:24px">输出当前状态</span></span></div>
<div class="ln" style="top:299px">14</div>
<div class="cl" style="top:299px">      data_1         <b>:</b> <span class="k">OUT</span> <span class="t">STD_LOGIC_VECTOR</span><b>(</b>3 <span class="k">DOWNTO</span> 0<b>);</b><span class="c">--<span class="z" style="width:40px;margin-right:8px">数字</span>1</span></div>
<div class="ln" style="top:322px">15</div>
<div class="cl" style="top:322px">      data_2         <b>:</b> <span class="k">OUT</span> <span class="t">STD_LOGIC_VECTOR</span><b>(</b>3 <span class="k">DOWNTO</span> 0<b>);</b><span class="c">--<span class="z" style="width:40px;margin-right:8px">数字</span>2</span></div>
<div class="ln" style="top:345px">16</div>
<div class="cl" style="top:345px">      data_3         <b>:</b> <span class="k">OUT</span> <span class="t">STD_LOGIC_VECTOR</span><b>(</b>3 <span class="k">DOWNTO</span> 0<b>)</b><span class="c">--<span class="z" style="width:40px;margin-right:8px">数字</span>3</span></div>
<div class="ln" style="top:368px">17</div>
<div class="cl" style="top:368px">   <b>);</b></div>
<div class="ln" style="top:391px">18</div>
<div class="cl" style="top:391px"><span class="k">END</span> data_ctrl<b>;</b></div>
<div class="ln" style="top:414px">19</div>
<div class="ln" style="top:437px">20</div>
<div class="cl" style="top:437px"><span class="k">ARCHITECTURE</span> behave <span class="k">OF</span> data_ctrl <span class="k">IS</span></div>
<div class="ln" style="top:460px">21</div>
<div class="cl" style="top:460px">    <span class="k">constant</span>  s_idle         <b>:</b> <span class="t">STD_LOGIC_VECTOR</span><b>(</b>2 <span class="k">DOWNTO</span> 0<b>)</b> <b>:=</b> <span class="s">&quot;000&quot;</span><b>;</b></div>
<div class="ln" style="top:483px">22</div>
<div class="cl" style="top:483px">    <span class="k">constant</span>  s_count        <b>:</b> <span class="t">STD_LOGIC_VECTOR</span><b>(</b>2 <span class="k">DOWNTO</span> 0<b>)</b> <b>:=</b> <span class="s">&quot;001&quot;</span><b>;</b></div>
<div class="ln" style="top:506px">23</div>
<div class="cl" style="top:506px">    <span class="k">constant</span>  s_cnt123       <b>:</b> <span class="t">STD_LOGIC_VECTOR</span><b>(</b>2 <span class="k">DOWNTO</span> 0<b>)</b> <b>:=</b> <span class="s">&quot;010&quot;</span><b>;</b></div>
<div class="ln" style="top:529px">24</div>
<div class="cl" style="top:529px">    <span class="k">constant</span>  s_cnt23        <b>:</b> <span class="t">STD_LOGIC_VECTOR</span><b>(</b>2 <span class="k">DOWNTO</span> 0<b>)</b> <b>:=</b> <span class="s">&quot;011&quot;</span><b>;</b></div>
<div class="ln" style="top:552px">25</div>
<div class="cl" style="top:552px">    <span class="k">constant</span>  s_cnt3         <b>:</b> <span class="t">STD_LOGIC_VECTOR</span><b>(</b>2 <span class="k">DOWNTO</span> 0<b>)</b> <b>:=</b> <span class="s">&quot;100&quot;</span><b>;</b></div>
<div class="ln" style="top:575px">26</div>
<div class="cl" style="top:575px">    <span class="k">constant</span>  s_end          <b>:</b> <span class="t">STD_LOGIC_VECTOR</span><b>(</b>2 <span class="k">DOWNTO</span> 0<b>)</b> <b>:=</b> <span class="s">&quot;101&quot;</span><b>;</b></div>
<div class="ln" style="top:598px">27</div>
<div class="ln" style="top:621px">28</div>
<div class="cl" style="top:621px">   <span class="k">SIGNAL</span> cnt1      <b>:</b> <span class="t">STD_LOGIC_VECTOR</span><b>(</b>3 <span class="k">DOWNTO</span> 0<b>)</b> <b>:=</b> <span class="s">&quot;0000&quot;</span><b>;</b></div>
<div class="ln" style="top:644px">29</div>
<div class="cl" style="top:644px">   <span class="k">SIGNAL</span> cnt2      <b>:</b> <span class="t">STD_LOGIC_VECTOR</span><b>(</b>3 <span class="k">DOWNTO</span> 0<b>)</b> <b>:=</b> <span class="s">&quot;0000&quot;</span><b>;</b></div>
<div class="fb" style="top:122px"></div>
<div class="fb" style="top:145px"></div>
<div class="fb" style="top:444px"></div>
</div>
<div class="a" style="left:330px;top:695px;width:1258px;height:17px;background:#f0f0f0;"></div>
<div class="a" style="left:348px;top:696px;width:1113px;height:15px;box-sizing:border-box;border:1px solid #979797;border-radius:2px;background:linear-gradient(#f2f2f2,#e6e6e6 45%,#d4d4d4 55%,#d0d0d0)"></div>
<div class="a" style="left:901px;top:700px;width:1px;height:7px;background:#606060;"></div>
<div class="a" style="left:903px;top:700px;width:1px;height:7px;background:#606060;"></div>
<div class="a" style="left:905px;top:700px;width:1px;height:7px;background:#606060;"></div>
<svg style="left:336px;top:700px" width="4" height="7"><path d="M4 0v7L0 3.5z" fill="#303030"/></svg>
<div class="a" style="left:0px;top:712px;width:330px;height:1px;background:#a0a0a0;"></div>
<div class="a" style="left:330px;top:712px;width:1258px;height:1px;background:#fff;"></div>
<div class="a" style="left:0px;top:713px;width:1588px;height:4px;background:#f8f8f8;"></div>
<div class="a" style="left:0px;top:717px;width:1588px;height:1px;background:#808080;"></div>
<div class="a" style="left:0px;top:718px;width:1588px;height:1px;background:#696969;"></div>
<div class="a" style="left:0px;top:719px;width:1588px;height:4px;background:#f6f6f6;"></div>
<div class="a" style="left:0px;top:723px;width:1588px;height:1px;background:#696969;"></div>
<div class="a" style="left:0px;top:724px;width:1588px;height:13px;background:#f0f0f0;"></div>
<div class="a" style="left:0px;top:722px;width:8px;height:2px;background:#f0f0f0;"></div>
<div class="a" style="left:8px;top:722px;width:1580px;height:1px;background:#808080;"></div>
<div class="a" style="left:8px;top:722px;width:1px;height:15px;background:#808080;"></div>
<div class="a" style="left:9px;top:723px;width:1579px;height:1px;background:#404040;"></div>
<div class="a" style="left:9px;top:723px;width:1px;height:14px;background:#404040;"></div>
<div class="a" style="left:113px;top:724px;width:1px;height:13px;background:#404040;"></div>
<div class="sim" style="left:47px;top:726px;font-size:12px;letter-spacing:-.2px;line-height:16px">Type</div>
<div class="sim" style="left:117px;top:726px;font-size:12px;letter-spacing:-.2px;line-height:16px">Message</div>
<div class="ui" style="left:-4px;top:720px;font-weight:bold;font-size:12px">x</div>
</body></html>
